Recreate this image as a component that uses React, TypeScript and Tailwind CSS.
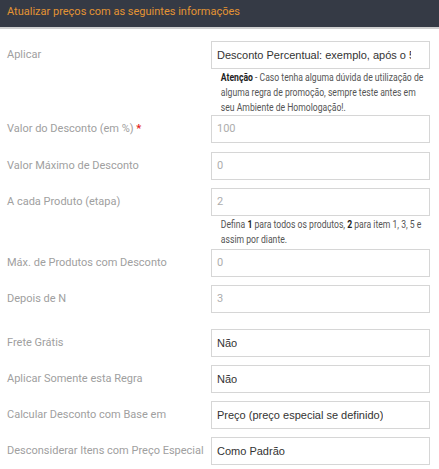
import type { ReactNode } from 'react';

const labelCls = "w-[204px] shrink-0 pt-[6px] text-[11px] leading-[16px] text-[#a0a0a0]";
const boxCls = "h-[28px] border border-[#d6d6d6] bg-white flex items-center pl-[5px] overflow-hidden whitespace-nowrap";
const noteCls = "mt-[1px] pl-[12px] text-[10.5px] leading-[15px] text-[#555] whitespace-nowrap scale-x-[0.82] origin-left";

function Row({ label, required, children, className = "mb-[8px]" }: { label: string; required?: boolean; children: ReactNode; className?: string }) {
    return (
        <div className={`flex ${className}`}>
            <div className={labelCls}>
                {label}
                {required && <span className="text-[#e31b1b] font-bold"> *</span>}
            </div>
            <div className="flex-1 min-w-0">{children}</div>
        </div>
    );
}

function TextInput({ value }: { value: string }) {
    return (
        <div className={`${boxCls} text-[11px] text-[#adadad]`}>{value}</div>
    );
}

function SelectBox({ value }: { value: string }) {
    return (
        <div className={`${boxCls} pr-[18px] text-[11px] text-[#333] font-['Liberation_Sans',Arial,sans-serif]`}>
            <span className="overflow-hidden">{value}</span>
        </div>
    );
}

export default function App() {
    return (
        <div className="w-[439px] h-[469px] bg-white font-['Roboto',sans-serif] overflow-hidden">
            <div className="h-[29px] bg-[#353a45] border-b-2 border-[#cfcfcf] pl-[7px] flex items-center">
                <span className="text-[11px] text-[#e49433] pb-[2px]">Atualizar preços com as seguintes informações</span>
            </div>

            <div className="pl-[7px] pr-[9px] pt-[12px]">
                <Row label="Aplicar" className="mb-[0px]">
                    <SelectBox value="Desconto Percentual: exemplo, após o 5º produto, desconto de X%" />
                    <div className={noteCls}>
                        <b className="text-[#222]">Atenção</b> - Caso tenha alguma dúvida de utilização de<br />
                        alguma regra de promoção, sempre teste antes em<br />
                        seu Ambiente de Homologação!.
                    </div>
                </Row>

                <Row label="Valor do Desconto (em %)" required className="mb-[9px]">
                    <TextInput value="100" />
                </Row>

                <Row label="Valor Máximo de Desconto">
                    <TextInput value="0" />
                </Row>

                <Row label="A cada Produto (etapa)" className="mb-[2px]">
                    <TextInput value="2" />
                    <div className={noteCls}>
                        Defina <b className="text-[#222]">1</b> para todos os produtos, <b className="text-[#222]">2</b> para item 1, 3, 5 e<br />
                        assim por diante.
                    </div>
                </Row>

                <Row label="Máx. de Produtos com Desconto">
                    <TextInput value="0" />
                </Row>

                <Row label="Depois de N" className="mb-[16px]">
                    <TextInput value="3" />
                </Row>

                <Row label="Frete Grátis">
                    <SelectBox value="Não" />
                </Row>

                <Row label="Aplicar Somente esta Regra">
                    <SelectBox value="Não" />
                </Row>

                <Row label="Calcular Desconto com Base em">
                    <SelectBox value="Preço (preço especial se definido)" />
                </Row>

                <Row label="Desconsiderar Itens com Preço Especial">
                    <SelectBox value="Como Padrão" />
                </Row>
            </div>
        </div>
    );
}
